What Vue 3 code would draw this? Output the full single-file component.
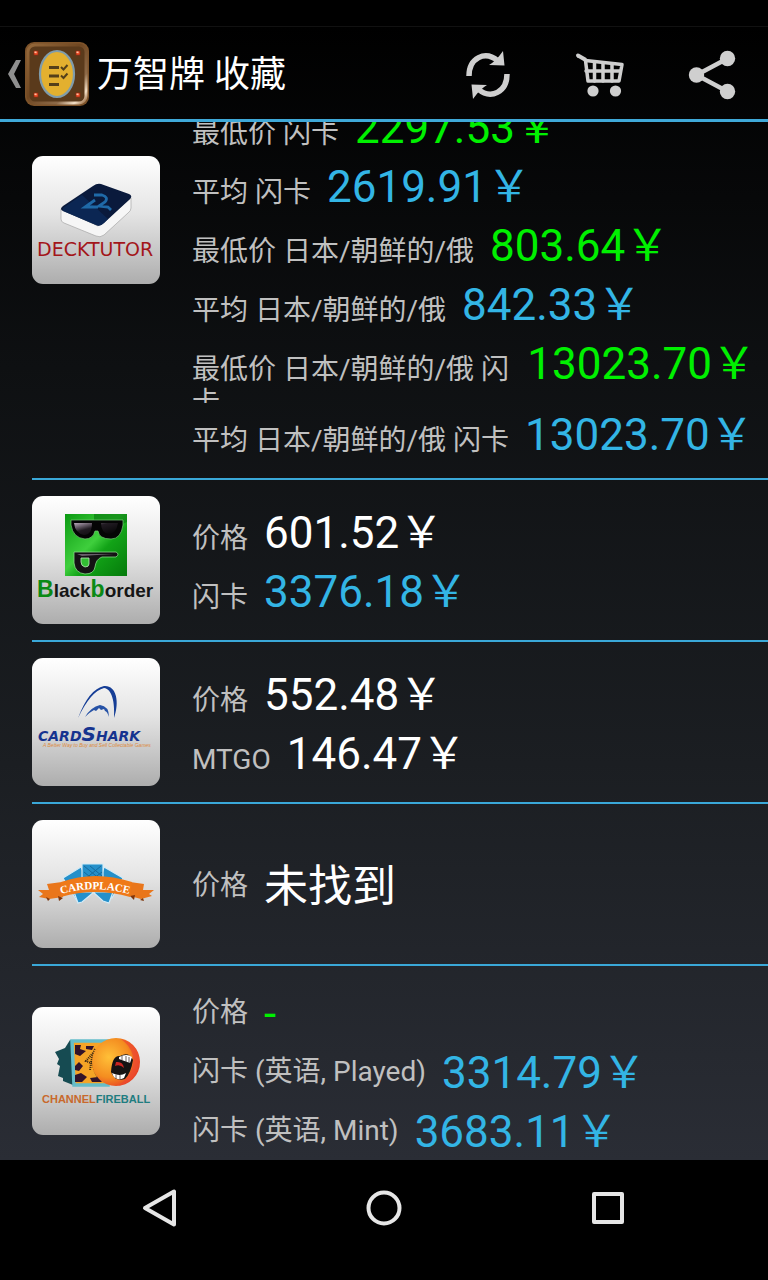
<script setup>
const shops = [
  {
    id: 'decktutor',
    name: 'DeckTutor',
    top: true,
    rows: [
      { label: '最低价 闪卡', value: '2297.53¥', tone: 'low' },
      { label: '平均 闪卡', value: '2619.91¥', tone: 'avg' },
      { label: '最低价 日本/朝鲜的/俄', value: '803.64¥', tone: 'low' },
      { label: '平均 日本/朝鲜的/俄', value: '842.33¥', tone: 'avg' },
      { label: '最低价 日本/朝鲜的/俄 闪卡', value: '13023.70¥', tone: 'low' },
      { label: '平均 日本/朝鲜的/俄 闪卡', value: '13023.70¥', tone: 'avg' },
    ],
  },
  {
    id: 'blackborder',
    name: 'Blackborder',
    rows: [
      { label: '价格', value: '601.52¥', tone: 'plain' },
      { label: '闪卡', value: '3376.18¥', tone: 'avg' },
    ],
  },
  {
    id: 'cardshark',
    name: 'CardShark',
    rows: [
      { label: '价格', value: '552.48¥', tone: 'plain' },
      { label: 'MTGO', value: '146.47¥', tone: 'plain' },
    ],
  },
  {
    id: 'cardplace',
    name: 'Cardplace',
    centered: true,
    rows: [{ label: '价格', value: '未找到', tone: 'plain' }],
  },
  {
    id: 'channelfireball',
    name: 'ChannelFireball',
    centered: true,
    rows: [
      { label: '价格', value: '-', tone: 'low' },
      { label: '闪卡 (英语, Played)', value: '3314.79¥', tone: 'avg' },
      { label: '闪卡 (英语, Mint)', value: '3683.11¥', tone: 'avg' },
    ],
  },
]
// Prices use the full-width yen sign.
for (const s of shops) for (const r of s.rows) r.value = r.value.replace('\u00a5', '\uffe5')
</script>

<template>
  <div class="screen">
    <div class="status"></div>
    <div class="app">
      <header class="bar">
        <button class="home" type="button" aria-label="返回">
          <svg class="chevron" viewBox="0 0 16 32" aria-hidden="true">
            <path d="M9 2H14L7 16L14 30H9L1 16Z" fill="#8f8f8f" />
          </svg>
          <svg class="badge" viewBox="0 0 64 64" aria-hidden="true">
            <defs>
              <linearGradient id="rim" x1="0" y1="0" x2="1" y2="1">
                <stop offset="0" stop-color="#94683a" />
                <stop offset=".45" stop-color="#6f4722" />
                <stop offset=".75" stop-color="#8d6a48" />
                <stop offset=".9" stop-color="#f3dfc6" />
                <stop offset="1" stop-color="#93663c" />
              </linearGradient>
            </defs>
            <rect width="64" height="64" rx="9" fill="#7c5229" />
            <rect x="3" y="3" width="58" height="58" rx="7" fill="#5a3a1b" stroke="url(#rim)" stroke-width="3" />
            <g fill="#f4512c" stroke="#8e2b12" stroke-width=".8">
              <rect x="9" y="9" width="4" height="4" /><rect x="51" y="9" width="4" height="4" />
              <rect x="9" y="51" width="4" height="4" /><rect x="51" y="51" width="4" height="4" />
            </g>
            <g fill="#ffc0a0">
              <rect x="9.500" y="9.500" width="2" height="1.500" /><rect x="51.500" y="9.500" width="2" height="1.500" />
              <rect x="9.500" y="51.500" width="2" height="1.500" /><rect x="51.500" y="51.500" width="2" height="1.500" />
            </g>
            <ellipse cx="32" cy="32" rx="17" ry="23" fill="#e3b02f" stroke="#7f9cab" stroke-width="2.200" />
            <path d="M24 25.500H34M24 34H34M24 42.500H34" stroke="#54401a" stroke-width="3" />
            <path d="M36 25L38.500 27.500L42.500 23M36 33.500L38.500 36L42.500 31.500" fill="none" stroke="#54401a" stroke-width="2" />
          </svg>
        </button>
        <h1 class="title">万智牌 收藏</h1>
        <div class="actions">
          <button type="button" aria-label="刷新">
            <svg viewBox="0 0 56 56" aria-hidden="true">
              <g id="turn">
                <path d="M9 30C9 12 25 4 38 15" fill="none" stroke="#cfcfcf" stroke-width="5.500" />
                <path d="M43 5L44.500 19.500L29 19Q36 15 43 5Z" fill="#cfcfcf" />
              </g>
              <use href="#turn" transform="rotate(180 28 29)" />
            </svg>
          </button>
          <button type="button" aria-label="购物车">
            <svg viewBox="0 0 56 56" aria-hidden="true">
              <g fill="none" stroke="#cfcfcf" stroke-linecap="round" stroke-linejoin="round">
                <path d="M6 9.500L13 13.500" stroke-width="4" />
                <path d="M13.500 14.500L50 18.500L47 35H16Z" stroke-width="3.500" />
                <path d="M14 25H48M22.500 16V35M31 17V35M40 18V35" stroke-width="3.500" />
              </g>
              <circle cx="21" cy="45" r="5.600" fill="#cfcfcf" />
              <circle cx="43.500" cy="45" r="5.600" fill="#cfcfcf" />
            </svg>
          </button>
          <button type="button" aria-label="分享">
            <svg viewBox="0 0 56 56" aria-hidden="true">
              <path d="M43.500 12.500L12.500 29L43.500 45.500" fill="none" stroke="#cfcfcf" stroke-width="4.500" />
              <g fill="#cfcfcf">
                <circle cx="43.500" cy="12.500" r="7.700" /><circle cx="12.500" cy="29" r="7.700" /><circle cx="43.500" cy="45.500" r="7.700" />
              </g>
            </svg>
          </button>
        </div>
      </header>

      <main class="viewport">
        <ul class="list">
          <li v-for="shop in shops" :key="shop.id" class="shop" :class="{ first: shop.top, centered: shop.centered }">
            <svg class="logo" viewBox="0 0 128 128" role="img" :aria-label="shop.name">
              <template v-if="shop.id === 'decktutor'">
                <path d="M29 53L66 70L99 42V52Q99 55 96 57L72 79Q68 82 64 80L32 67Q29 66 29 63Z" fill="#f6f6f6" stroke="#a6a6a6" stroke-width=".7" />
                <path d="M31 50L61 30Q65 27 69 28L97 38Q101 40 98 43L72 67Q68 71 64 69L31 55Q27 53 31 50Z" fill="#0a1a3c" />
                <path d="M31 52L50 39L76 63L72 67Q68 71 64 69L31 55Z" fill="#0c2c5c" opacity=".7" />
                <path d="M62 39H70Q77 41 73 46L67 50L76 51L79 54M63 44L53 51H66" fill="none" stroke="#1f6aa8" stroke-width="2.800" />
                <text x="5" y="100" class="deck">DECKTUTOR</text>
              </template>

              <template v-else-if="shop.id === 'blackborder'">
                <defs>
                  <linearGradient id="green" x1="0" y1="0" x2="1" y2="1">
                    <stop offset="0" stop-color="#0b9a12" /><stop offset=".45" stop-color="#3fcf3d" />
                    <stop offset=".6" stop-color="#12a317" /><stop offset="1" stop-color="#057a0b" />
                  </linearGradient>
                  <linearGradient id="lens" x1="0" y1="0" x2="1" y2="1">
                    <stop offset="0" stop-color="#b8a8ba" /><stop offset=".4" stop-color="#211b22" /><stop offset="1" stop-color="#000" />
                  </linearGradient>
                </defs>
                <rect x="33" y="18" width="62" height="62" fill="url(#green)" />
                <path d="M62 18H95V26Q78 35 62 35Z" fill="#087d0f" opacity=".7" />
                <path d="M39 24H91V29Q89 43 79 43Q67 43 66 35H63Q61 43 53 43Q41 42 39 29Z" fill="#050505" stroke="#76c877" stroke-width=".7" />
                <path d="M42 27H60Q60 39 52 39Q43 37 42 27ZM69 27H86Q84 38 77 38Q69 37 69 27Z" fill="url(#lens)" />
                <path d="M42 56H84Q88 58 84 61H70Q64 63 63 71Q62 78 53 78Q43 77 42 67Z" fill="#141214" stroke="#86d987" stroke-width=".8" />
                <path d="M45 58H82L65 59L50 60Z" fill="#6a5f6c" />
                <path d="M49 62H57V68Q57 71 53 71Q49 70 49 66Z" fill="#32bd33" stroke="#bceabc" stroke-width=".8" />
                <text x="5" y="101" class="black"><tspan class="green">B</tspan>lack<tspan class="green">b</tspan>order</text>
              </template>

              <template v-else-if="shop.id === 'cardshark'">
                <path d="M46 60Q57 31 72 28C84 27 88 43 82 60C83 44 80 31 72 30Q59 33 46 60Z" fill="#163e96" />
                <path d="M53 59Q59 49 68 47Q77 48 77 59Q75 53 73 53L72 51L69 52L67 50L64 53L62 52Q58 54 53 59Z" fill="#2652a6" />
                <text x="6" y="83" class="shark">CARD<tspan class="big">S</tspan>HARK</text>
                <text x="11" y="89" class="tagline">A Better Way to Buy and Sell Collectable Games</text>
              </template>

              <template v-else-if="shop.id === 'cardplace'">
                <g fill="#2590ca" stroke="#d4ebf6" stroke-width="1.200">
                  <path d="M31 58L49 47L60 70L45 81Z" /><path d="M72 47L91 58L80 78L65 70Z" />
                  <path d="M50 44H71V70H50Z" />
                  <path d="M42 72H62L50 82L46 83Z" /><path d="M61 72H81L77 83L71 81Z" />
                </g>
                <path d="M52 46L69 60M52 52L64 62M58 46L70 56M69 46L52 60M70 52L57 62" stroke="#176a9d" stroke-width="1" />
                <path d="M6 70L17 70L15 64L30 62L31 77L17 79L7 77L11 74ZM98 62L112 64L111 70H122L117 74L120 76L109 79L98 76Z" fill="#e9761b" />
                <path d="M26 76L31 78L27 81ZM98 76L103 75L102 80ZM14 77L18 79L16 81ZM111 78L108 80L112 81Z" fill="#7e350b" />
                <path d="M29 62Q63 50 100 62L98 77Q63 67 29 77Z" fill="#ef7918" />
                <path id="ribbon" d="M29 74Q64 64 101 75" fill="none" />
                <text class="place"><textPath href="#ribbon">CARDPLACE</textPath></text>
              </template>

              <template v-else>
                <defs>
                  <radialGradient id="fire" cx=".35" cy=".4" r=".7">
                    <stop offset="0" stop-color="#ffc038" /><stop offset=".6" stop-color="#f48d20" /><stop offset="1" stop-color="#e63925" />
                  </radialGradient>
                </defs>
                <path d="M38 33L33 41L23 45L27 52L25 57L28 59L26 69L31 71V74L41 78L45 35Z" fill="#164b52" />
                <path d="M40 34H76V78H42Z" fill="#f5a426" stroke="#66bdca" stroke-width="3.500" />
                <path d="M43 38H49L48 42L54 44L48 49L43 47ZM54 39H62L60 43L54 42ZM43 59L47 55L51 59L47 64L43 63ZM43 68L49 66L55 70L50 75H43ZM58 71L66 70L70 75H60Z" fill="#321329" />
                <path d="M63 42Q57 56 66 70M61 46L54 54L61 57M60 50L58 63" stroke="#342214" stroke-width="2" stroke-dasharray="1 1" fill="none" />
                <circle cx="84" cy="55" r="24" fill="url(#fire)" />
                <path d="M89 32Q108 37 107 57Q103 75 86 79Q103 67 101 49Q98 38 89 32Z" fill="#ed4930" opacity=".7" />
                <path d="M79 65Q80 48 88 49Q97 44 101 53Q99 66 93 72Q83 75 79 65Z" fill="#161313" />
                <path d="M87 50Q95 46 100 50L98 56L87 52Z" fill="#fff" />
                <path d="M80 66Q88 70 94 66L92 71Q83 75 80 66Z" fill="#fff" />
                <path d="M84 55Q91 54 92 61Q88 57 83 59Z" fill="#ca2421" />
                <path d="M90 49V53M94 49V55M97 50V56M84 68V72M88 68V72" stroke="#2b1a18" stroke-width=".7" />
                <text x="10" y="96" class="fireball">CHANNEL<tspan class="teal">FIREBALL</tspan></text>
              </template>
            </svg>
            <dl class="prices">
              <div v-for="row in shop.rows" :key="row.label" class="price">
                <dt>{{ row.label }}</dt>
                <dd :class="row.tone">{{ row.value }}</dd>
              </div>
            </dl>
          </li>
        </ul>
      </main>
    </div>

    <nav class="keys">
      <button type="button" aria-label="后退">
        <svg viewBox="0 0 40 40" aria-hidden="true"><path d="M5 20L34 3.500V36.500Z" /></svg>
      </button>
      <button type="button" aria-label="主屏幕">
        <svg viewBox="0 0 40 40" aria-hidden="true"><circle cx="20" cy="20" r="15.500" /></svg>
      </button>
      <button type="button" aria-label="最近任务">
        <svg viewBox="0 0 40 40" aria-hidden="true"><rect x="6" y="6" width="28" height="28" /></svg>
      </button>
    </nav>
  </div>
</template>

<style>
body {
  margin: 0;
  background: #000;
}
</style>

<style scoped>
.screen {
  display: flex;
  flex-direction: column;
  height: 100vh;
  background: #000;
  color: #fff;
  font-family: Roboto, "Noto Sans CJK SC", sans-serif;
}
.status {
  flex: none;
  height: 26px;
}
.app {
  flex: 1;
  min-height: 0;
  display: flex;
  flex-direction: column;
  border-top: 1px solid #111;
  background: linear-gradient(#000, #0e1012 30%, #1b1e22 65%, #2a2d35);
}
button {
  display: flex;
  align-items: center;
  justify-content: center;
  margin: 0;
  padding: 0;
  border: 0;
  background: none;
  color: inherit;
}
.bar {
  flex: none;
  display: flex;
  align-items: center;
  height: 90px;
  padding-top: 2px;
  border-bottom: 3px solid #3fa9d8;
}
.home {
  padding-left: 7px;
  gap: 2px;
}
.chevron {
  width: 16px;
  height: 32px;
}
.badge {
  width: 64px;
  height: 64px;
}
.title {
  flex: 1;
  margin: 0;
  padding: 2px 0 0 8px;
  font-size: 36px;
  line-height: 44px;
  font-weight: 400;
  white-space: nowrap;
}
.actions {
  display: flex;
}
.actions button {
  width: 112px;
  height: 90px;
}
.actions svg {
  width: 56px;
  height: 56px;
}
.viewport {
  flex: 1;
  min-height: 0;
  overflow: hidden;
}
.list {
  margin: -26px 0 0;
  padding: 0 0 0 32px;
  list-style: none;
}
.shop {
  display: flex;
  align-items: center;
  gap: 32px;
  padding: 16px 12px 16px 0;
}
.shop + .shop {
  border-top: 2px solid #3aa8d8;
}
.shop.first {
  align-items: flex-start;
  padding-top: 0;
}
.first .logo {
  margin-top: 60px;
}
.logo {
  flex: none;
  width: 128px;
  height: 128px;
  border-radius: 11px;
  background: linear-gradient(#fff, #e4e4e4 45%, #adadad);
}
.prices {
  flex: 1;
  min-width: 0;
  margin: 0;
}
.price {
  display: flex;
  align-items: baseline;
  gap: 16px;
}
.centered .price {
  align-items: center;
}
dt {
  max-height: 50px;
  overflow: hidden;
  color: #c0c0c0;
  font-size: 28px;
  line-height: 33px;
}
.centered dt {
  padding-top: 2px;
}
dd {
  flex: none;
  margin: 0;
  padding-top: 5px;
  font-size: 44px;
  line-height: 54px;
}
.low {
  color: #00f000;
}
.avg {
  color: #33b5e5;
}
.plain {
  color: #fff;
}
.deck {
  fill: #a3161a;
  font: 19px "DejaVu Sans", sans-serif;
}
.black {
  fill: #161616;
  font: bold 19px "Liberation Sans", sans-serif;
}
.black .green {
  fill: #0b8a15;
  font-size: 23px;
}
.shark {
  fill: #15338f;
  font: italic bold 14px "DejaVu Sans", sans-serif;
}
.shark .big {
  font-size: 20px;
}
.tagline {
  fill: #dd8a3c;
  font: italic 5px "Liberation Sans", sans-serif;
}
.place {
  fill: #fff;
  font: bold 11px "Liberation Serif", serif;
}
.fireball {
  fill: #c8692c;
  font: bold 11px "Liberation Sans", sans-serif;
}
.fireball .teal {
  fill: #1f7d80;
}
.keys {
  flex: none;
  display: flex;
  padding: 0 48px 24px;
}
.keys button {
  flex: 1;
  height: 96px;
}
.keys svg {
  width: 40px;
  height: 40px;
  fill: none;
  stroke: #e6e6e6;
  stroke-width: 4;
  stroke-linejoin: round;
}
</style>
